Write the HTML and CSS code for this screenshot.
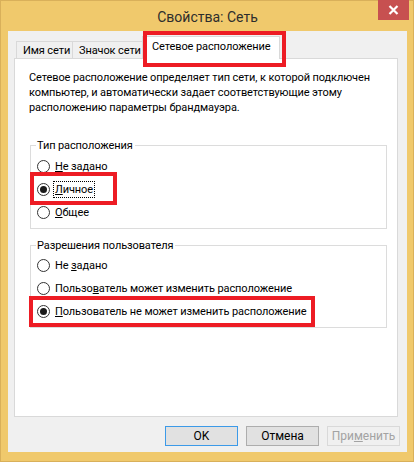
FILE: index.html
```html
<!DOCTYPE html>
<html lang="ru">
<head>
<meta charset="utf-8">
<title>Свойства: Сеть</title>
<link rel="stylesheet" href="styles.css">
</head>
<body>
<div class="window">
  <div class="titlebar">
    <span class="title">Свойства: Сеть</span>
    <div class="close">
      <svg width="11" height="10" viewBox="0 0 11 10"><path d="M1.5 1 L9.5 9 M9.5 1 L1.5 9" stroke="#fff" stroke-width="2.2" fill="none"/></svg>
    </div>
  </div>
  <div class="client">
    <div class="tabs">
      <div class="tab">Имя сети</div>
      <div class="tab">Значок сети</div>
      <div class="tab active">Сетевое расположение</div>
    </div>
    <div class="panel">
      <p class="desc">Сетевое расположение определяет тип сети, к которой подключен<br>компьютер, и автоматически задает соответствующие этому<br>расположению параметры брандмауэра.</p>
      <fieldset class="group">
        <legend>Тип расположения</legend>
        <div class="radio"><span class="circle"></span><span class="label"><u>Н</u>е задано</span></div>
        <div class="radio"><span class="circle checked"></span><span class="label focus"><u>Л</u>ичное</span></div>
        <div class="radio"><span class="circle"></span><span class="label"><u>О</u>бщее</span></div>
      </fieldset>
      <fieldset class="group second">
        <legend>Разрешения пользователя</legend>
        <div class="radio"><span class="circle"></span><span class="label">Не <u>з</u>адано</span></div>
        <div class="radio"><span class="circle"></span><span class="label">Пользо<u>в</u>атель может изменить расположение</span></div>
        <div class="radio"><span class="circle checked"></span><span class="label"><u>П</u>ользователь не может изменить расположение</span></div>
      </fieldset>
    </div>
    <div class="buttons">
      <button class="btn default">OK</button>
      <button class="btn">Отмена</button>
      <button class="btn disabled">При<u>м</u>енить</button>
    </div>
  </div>
  <div class="mark mark-tab"></div>
  <div class="mark mark-private"></div>
  <div class="mark mark-perm"></div>
</div>
</body>
</html>
```

FILE: styles.css
```css
* { box-sizing: border-box; }
html, body { margin: 0; padding: 0; }
body {
  font-family: Roboto, "Noto Sans", sans-serif;
  font-size: 11px;
  letter-spacing: -0.1px;
  color: #000;
  background: #f0c96c;
}
.window {
  position: relative;
  width: 414px;
  height: 462px;
  background: #f0c96c;
  box-shadow: inset 0 0 0 1px #d9b05a;
  display: flex;
  flex-direction: column;
  padding: 1px 7px 10px 8px;
}
.titlebar {
  position: relative;
  height: 30px;
  display: flex;
  align-items: center;
  justify-content: center;
}
.title {
  font-size: 14px;
  letter-spacing: 0;
  color: #2d2d2d;
  margin-top: 1px;
}
.close {
  position: absolute;
  top: -1px;
  right: -2px;
  width: 31px;
  height: 20px;
  background: #c75050;
  display: flex;
  align-items: center;
  justify-content: center;
}
.client {
  flex: 1;
  background: #f0f0f0;
  display: flex;
  flex-direction: column;
  padding: 6px 7px 6px 6px;
}
.tabs {
  display: flex;
  align-items: flex-end;
  height: 21px;
  padding-left: 2px;
  position: relative;
  z-index: 1;
}
.tab {
  height: 17px;
  line-height: 17px;
  border: 1px solid #d9d9d9;
  border-bottom: none;
  background: #f0f0f0;
  padding: 0 6px;
  white-space: nowrap;
  margin-right: -1px;
}
.tab:nth-child(1) { width: 57px; }
.tab:nth-child(2) { width: 71px; }
.tab.active {
  height: 23px;
  line-height: 20px;
  width: 138px;
  margin-left: 0;
  margin-bottom: -1px;
  background: #fff;
  padding: 0 9px;
}
.panel {
  width: 384px;
  height: 359px;
  background: #fff;
  border: 1px solid #d9d9d9;
  padding: 11px 9px 0 14px;
}
.desc {
  margin: 0;
  line-height: 15px;
  white-space: nowrap;
}
.group {
  margin: 23px 0 0 1px;
  width: 357px;
  border: 1px solid #dcdcdc;
  padding: 2px 6px 4px 6px;
  min-inline-size: 0;
}
.group.second { margin-top: 9px; padding-top: 1px; }
.group legend {
  padding: 0 2px 0 1px;
  margin-left: -1px;
  line-height: 15px;
}
.radio {
  height: 23px;
  display: flex;
  align-items: center;
}
.circle {
  width: 13px;
  height: 13px;
  border: 1px solid #333;
  border-radius: 50%;
  background: #fff;
  display: flex;
  align-items: center;
  justify-content: center;
  flex: none;
}
.circle.checked::after {
  content: "";
  width: 7px;
  height: 7px;
  border-radius: 50%;
  background: #1a1a1a;
}
.label {
  margin-left: 3px;
  padding: 1px 1px;
  white-space: nowrap;
  border: 1px dotted transparent;
}
.label.focus { border-color: #000; }
.buttons {
  display: flex;
  justify-content: flex-end;
  gap: 8px;
  margin-top: 9px;
  padding-right: 0;
}
.btn {
  width: 73px;
  height: 20px;
  font: inherit;
  font-size: 12px;
  color: #000;
  background: #e1e1e1;
  border: 1px solid #adadad;
  padding: 0;
  margin: 0;
}
.btn.default { border-color: #3c9ae8; }
.btn.disabled {
  color: #a3a3a3;
  background: #f0f0f0;
  border-color: #d9d9d9;
}
.mark {
  position: absolute;
  border: 4px solid #ed1c24;
  pointer-events: none;
  z-index: 5;
}
.mark-tab { left: 143px; top: 31px; width: 143px; height: 36px; }
.mark-private { left: 30px; top: 172px; width: 87px; height: 33px; }
.mark-perm { left: 29px; top: 296px; width: 286px; height: 31px; }
```
